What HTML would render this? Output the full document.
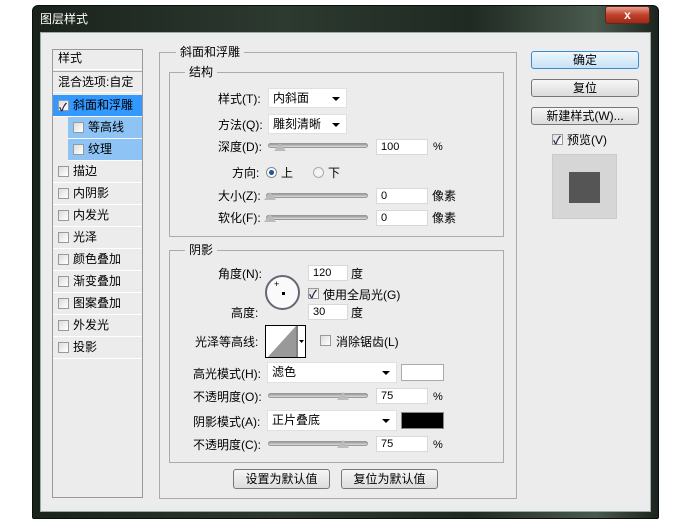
<!DOCTYPE html>
<html><head><meta charset="utf-8"><style>
*{margin:0;padding:0;box-sizing:border-box}
body{width:693px;height:523px;background:#fff;position:relative;overflow:hidden;font-family:"Liberation Sans","Noto Sans CJK SC",sans-serif;font-size:12px;color:#000}
.a{position:absolute}
.win{left:32px;top:5px;width:627px;height:514px;background:linear-gradient(90deg,#1a221c,#2d3a30 40%,#1f2a22 70%,#4a5a4e 90%,#1c241e);border-radius:6px 6px 2px 2px;border:1px solid #0a0f0a}
.body{left:40px;top:32px;width:611px;height:480px;background:#ececec;border:1px solid #9aa}
.t{position:absolute;white-space:nowrap;line-height:14px}
.grp{position:absolute;border:1px solid #aaa}
.leg{position:absolute;background:#ececec;padding:0 4px;line-height:14px}
.sel{position:absolute;background:#fff;border:1px solid #e0e0e0;padding-left:4px;line-height:18px}
.sel:after{content:"";position:absolute;right:6px;top:8px;border:4px solid transparent;border-top:4px solid #000;border-bottom:0}
.inp{position:absolute;background:#fff;border:1px solid #d8d8d8;padding-left:4px;line-height:14px;font-size:11px}
.sl{position:absolute;height:5px;border-radius:3px;background:linear-gradient(#999,#ddd);border:1px solid #999}
.th{position:absolute;width:0;height:0;border-left:6px solid transparent;border-right:6px solid transparent;border-bottom:8px solid #bbb}
.cb{position:absolute;width:11px;height:11px;border:1px solid #999;background:linear-gradient(135deg,#ddd,#fff)}
.ck:after{content:"✓";position:absolute;left:0;top:-3px;font-size:11px;color:#224;font-weight:bold}
.btn{position:absolute;border:1px solid #777;border-radius:3px;background:linear-gradient(#f6f6f6,#dcdcdc);text-align:center;line-height:16px}
.li{position:absolute;left:53px;width:89px;height:22px;border-bottom:1px solid #fff;padding-left:5px;line-height:21px}
.li .cb{left:5px;top:5px}
.li span{position:absolute;left:20px}
</style></head><body>
<div class="a win"></div>
<div class="t" style="left:40px;top:12px;color:#fff;font-size:12px">图层样式</div>
<div class="a" style="left:605px;top:6px;width:45px;height:18px;border-radius:3px;border:1px solid #5a2a22;background:linear-gradient(#e8a090,#c0402a 50%,#a02818);color:#fff;text-align:center;font-weight:bold;line-height:16px">x</div>
<div class="a body"></div>

<div class="a" style="left:52px;top:49px;width:91px;height:449px;border:1px solid #999;background:#ececec"></div>
<div class="li" style="top:48px">样式</div>
<div class="li" style="top:71px;border-top:1px solid #aaa">混合选项:自定</div>
<div class="li" style="top:95px;background:#3399ff;height:22px"><div class="cb ck"></div><span>斜面和浮雕</span></div>
<div class="li" style="top:117px;left:68px;width:74px;background:#8ec3f5"><div class="cb"></div><span>等高线</span></div>
<div class="li" style="top:139px;left:68px;width:74px;background:#8ec3f5"><div class="cb"></div><span>纹理</span></div>
<div class="li" style="top:161px"><div class="cb"></div><span>描边</span></div>
<div class="li" style="top:183px"><div class="cb"></div><span>内阴影</span></div>
<div class="li" style="top:205px"><div class="cb"></div><span>内发光</span></div>
<div class="li" style="top:227px"><div class="cb"></div><span>光泽</span></div>
<div class="li" style="top:249px"><div class="cb"></div><span>颜色叠加</span></div>
<div class="li" style="top:271px"><div class="cb"></div><span>渐变叠加</span></div>
<div class="li" style="top:293px"><div class="cb"></div><span>图案叠加</span></div>
<div class="li" style="top:315px"><div class="cb"></div><span>外发光</span></div>
<div class="li" style="top:337px"><div class="cb"></div><span>投影</span></div>

<div class="grp" style="left:159px;top:52px;width:358px;height:447px"></div>
<div class="leg" style="left:176px;top:45px">斜面和浮雕</div>
<div class="grp" style="left:169px;top:72px;width:335px;height:165px"></div>
<div class="leg" style="left:185px;top:65px">结构</div>

<div class="t" style="left:218px;top:92px">样式(T):</div>
<div class="sel" style="left:268px;top:88px;width:79px;height:20px">内斜面</div>
<div class="t" style="left:218px;top:118px">方法(Q):</div>
<div class="sel" style="left:268px;top:114px;width:79px;height:20px">雕刻清晰</div>
<div class="t" style="left:218px;top:140px">深度(D):</div>
<div class="sl" style="left:268px;top:143px;width:100px"></div><div class="th" style="left:274px;top:143px"></div>
<div class="inp" style="left:376px;top:139px;width:52px;height:16px">100</div>
<div class="t" style="left:433px;top:140px;font-size:11px">%</div>
<div class="t" style="left:232px;top:166px">方向:</div>
<div class="a" style="left:266px;top:167px;width:11px;height:11px;border-radius:50%;border:1px solid #888;background:radial-gradient(#1a5a9a 35%,#fff 45%)"></div>
<div class="t" style="left:281px;top:166px">上</div>
<div class="a" style="left:313px;top:167px;width:11px;height:11px;border-radius:50%;border:1px solid #aaa;background:#f4f4f4"></div>
<div class="t" style="left:328px;top:166px">下</div>
<div class="t" style="left:218px;top:189px">大小(Z):</div>
<div class="sl" style="left:266px;top:193px;width:102px"></div><div class="th" style="left:264px;top:192px"></div>
<div class="inp" style="left:376px;top:188px;width:52px;height:16px">0</div>
<div class="t" style="left:432px;top:189px">像素</div>
<div class="t" style="left:218px;top:211px">软化(F):</div>
<div class="sl" style="left:266px;top:215px;width:102px"></div><div class="th" style="left:264px;top:214px"></div>
<div class="inp" style="left:376px;top:210px;width:52px;height:16px">0</div>
<div class="t" style="left:432px;top:211px">像素</div>

<div class="grp" style="left:169px;top:250px;width:335px;height:213px"></div>
<div class="leg" style="left:185px;top:243px">阴影</div>
<div class="t" style="left:218px;top:267px">角度(N):</div>
<div class="inp" style="left:308px;top:265px;width:40px;height:16px">120</div>
<div class="t" style="left:351px;top:267px">度</div>
<div class="a" style="left:265px;top:275px;width:35px;height:35px;border-radius:50%;border:2px solid #667;background:#fafafa"></div>
<div class="a" style="left:282px;top:292px;width:3px;height:3px;background:#000"></div>
<div class="t" style="left:274px;top:277px;font-size:9px">+</div>
<div class="cb ck" style="left:308px;top:288px"></div>
<div class="t" style="left:323px;top:288px">使用全局光(G)</div>
<div class="t" style="left:231px;top:306px">高度:</div>
<div class="inp" style="left:308px;top:304px;width:40px;height:16px">30</div>
<div class="t" style="left:351px;top:306px">度</div>
<div class="t" style="left:195px;top:335px">光泽等高线:</div>
<div class="a" style="left:265px;top:325px;width:41px;height:33px;border:1px solid #000;background:#fff;overflow:hidden">
<svg width="41" height="33"><polygon points="0,33 30,0 30,33" fill="#999"/><line x1="31" y1="0" x2="31" y2="33" stroke="#000"/><polygon points="33,14 38,14 35.5,17" fill="#000"/></svg></div>
<div class="cb" style="left:320px;top:335px"></div>
<div class="t" style="left:336px;top:335px">消除锯齿(L)</div>
<div class="t" style="left:193px;top:367px">高光模式(H):</div>
<div class="sel" style="left:267px;top:362px;width:130px;height:21px">滤色</div>
<div class="a" style="left:401px;top:364px;width:43px;height:17px;background:#fff;border:1px solid #aaa"></div>
<div class="t" style="left:193px;top:390px">不透明度(O):</div>
<div class="sl" style="left:268px;top:393px;width:100px"></div><div class="th" style="left:337px;top:392px"></div>
<div class="inp" style="left:376px;top:388px;width:52px;height:16px">75</div>
<div class="t" style="left:433px;top:390px;font-size:11px">%</div>
<div class="t" style="left:193px;top:415px">阴影模式(A):</div>
<div class="sel" style="left:267px;top:410px;width:130px;height:21px">正片叠底</div>
<div class="a" style="left:401px;top:412px;width:43px;height:17px;background:#000;border:1px solid #888"></div>
<div class="t" style="left:193px;top:438px">不透明度(C):</div>
<div class="sl" style="left:268px;top:441px;width:100px"></div><div class="th" style="left:337px;top:440px"></div>
<div class="inp" style="left:376px;top:436px;width:52px;height:16px">75</div>
<div class="t" style="left:433px;top:438px;font-size:11px">%</div>

<div class="btn" style="left:233px;top:469px;width:97px;height:20px;line-height:18px">设置为默认值</div>
<div class="btn" style="left:341px;top:469px;width:97px;height:20px;line-height:18px">复位为默认值</div>

<div class="btn" style="left:531px;top:51px;width:108px;height:18px;border-color:#3a8ccc;background:linear-gradient(#eef7fd,#c6e2f6)">确定</div>
<div class="btn" style="left:531px;top:79px;width:108px;height:18px">复位</div>
<div class="btn" style="left:531px;top:107px;width:108px;height:18px">新建样式(W)...</div>
<div class="cb ck" style="left:552px;top:134px"></div>
<div class="t" style="left:567px;top:133px">预览(V)</div>
<div class="a" style="left:552px;top:154px;width:65px;height:65px;background:#d6d6d6;border:1px solid #ccc"></div>
<div class="a" style="left:569px;top:172px;width:31px;height:31px;background:#555"></div>
</body></html>
